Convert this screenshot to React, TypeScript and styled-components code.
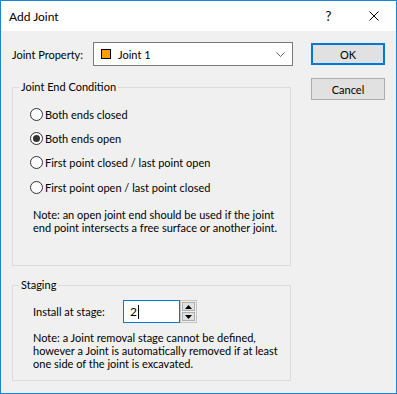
import React, { FC } from "react";
import styled, { createGlobalStyle } from "styled-components";

const GlobalStyle = createGlobalStyle`
  html, body {
    margin: 0;
    padding: 0;
  }
  body {
    font-family: Lato, "Liberation Sans", sans-serif;
    font-size: 11px;
    color: #000;
  }
  * {
    box-sizing: border-box;
  }
`;

const Window = styled.div`
  width: 397px;
  height: 394px;
  border: 1px solid #1883d7;
  display: flex;
  flex-direction: column;
  background: #f0f0f0;
  overflow: hidden;
`;

const TitleBar = styled.div`
  height: 30px;
  background: #fff;
  display: flex;
  align-items: center;
  padding-left: 8px;
`;

const Title = styled.div`
  flex: 1;
  font-size: 12px;
  padding-top: 1px;
`;

const TitleButton = styled.div`
  width: 45px;
  height: 30px;
  display: flex;
  align-items: center;
  justify-content: center;
  font-size: 13px;
`;

const Body = styled.div`
  flex: 1;
  display: flex;
  gap: 20px;
  padding: 11px 0 0 11px;
`;

const LeftColumn = styled.div`
  width: 279px;
  display: flex;
  flex-direction: column;
`;

const RightColumn = styled.div`
  width: 74px;
  padding-top: 1px;
  display: flex;
  flex-direction: column;
  gap: 13px;
`;

const PropertyRow = styled.div`
  display: flex;
  align-items: center;
  width: 281px;
  height: 24px;
`;

const PropertyLabel = styled.div`
  width: 81px;
`;

const Combo = styled.div`
  width: 200px;
  height: 24px;
  border: 1px solid #7a7a7a;
  background: #fff;
  display: flex;
  align-items: center;
  padding: 0 7px;
  gap: 7px;
`;

const Swatch = styled.span<{ $color: string }>`
  width: 10px;
  height: 10px;
  border: 1px solid #000;
  background: ${(p) => p.$color};
`;

const ComboText = styled.span`
  flex: 1;
`;

const Group = styled.fieldset<{ $top: number; $bottom: number }>`
  margin: ${(p) => p.$top}px 0 0 0;
  padding: 0 0 ${(p) => p.$bottom}px 0;
  border: 1px solid #dcdcdc;
  min-inline-size: 0;
`;

const Legend = styled.legend`
  margin-left: 6px;
  padding: 0 2px;
  line-height: 14px;
`;

const RadioList = styled.div`
  padding: 8px 0 0 17px;
`;

const RadioRow = styled.label`
  display: flex;
  align-items: center;
  gap: 2px;
  height: 24.3px;
  white-space: nowrap;
`;

const RadioCircle = styled.span<{ $checked?: boolean }>`
  width: 13px;
  height: 13px;
  border-radius: 50%;
  border: 1px solid #333;
  background: #fff;
  display: flex;
  align-items: center;
  justify-content: center;

  &::after {
    content: "";
    width: 7px;
    height: 7px;
    border-radius: 50%;
    background: ${(p) => (p.$checked ? "#333" : "transparent")};
  }
`;

const Note = styled.div<{ $top: number }>`
  margin-top: ${(p) => p.$top}px;
  padding-left: 20px;
  line-height: 13px;
  white-space: nowrap;
`;

const StageRow = styled.div`
  display: flex;
  align-items: center;
  padding: 8px 0 0 20px;
`;

const StageLabel = styled.div`
  width: 90px;
`;

const SpinInput = styled.div`
  width: 57px;
  height: 23px;
  border: 1px solid #0078d7;
  background: #fff;
  display: flex;
  align-items: center;
  padding-left: 6px;
  font-size: 12px;
`;

const Caret = styled.span`
  width: 1px;
  height: 14px;
  margin-left: 1px;
  background: #000;
`;

const SpinButtons = styled.div`
  width: 17px;
  height: 23px;
  display: flex;
  flex-direction: column;
  border: 1px solid #c4c4c4;
  background: #f0f0f0;
  padding: 1px;
  gap: 1px;
`;

const SpinButton = styled.div`
  flex: 1;
  border: 1px solid #adadad;
  background: #e1e1e1;
  display: flex;
  align-items: center;
  justify-content: center;
`;

const Button = styled.div<{ $default?: boolean }>`
  height: 22px;
  background: #e1e1e1;
  border: ${(p) => (p.$default ? "2px solid #0078d7" : "1px solid #adadad")};
  display: flex;
  align-items: center;
  justify-content: center;
`;

const Arrow: FC<{ up?: boolean }> = ({ up }) => (
  <svg width="7" height="4" viewBox="0 0 7 4">
    <polygon points={up ? "0,4 7,4 3.5,0" : "0,0 7,0 3.5,4"} fill="#000" />
  </svg>
);

const options = [
  "Both ends closed",
  "Both ends open",
  "First point closed / last point open",
  "First point open / last point closed"
];

export default function App() {
  return (
    <>
      <GlobalStyle />
      <Window>
        <TitleBar>
          <Title>Add Joint</Title>
          <TitleButton>?</TitleButton>
          <TitleButton>
            <svg width="10" height="10" viewBox="0 0 10 10">
              <path d="M0.5 0.5 L9.5 9.5 M9.5 0.5 L0.5 9.5" stroke="#000" strokeWidth="1" />
            </svg>
          </TitleButton>
        </TitleBar>
        <Body>
          <LeftColumn>
            <PropertyRow>
              <PropertyLabel>Joint Property:</PropertyLabel>
              <Combo>
                <Swatch $color="#ffa000" />
                <ComboText>Joint 1</ComboText>
                <svg width="9" height="5" viewBox="0 0 9 5">
                  <polyline points="0.5,0.5 4.5,4.5 8.5,0.5" fill="none" stroke="#606060" strokeWidth="1" />
                </svg>
              </Combo>
            </PropertyRow>

            <Group $top={14} $bottom={31}>
              <Legend>Joint End Condition</Legend>
              <RadioList>
                {options.map((o, i) => (
                  <RadioRow key={o}>
                    <RadioCircle $checked={i === 1} />
                    {o}
                  </RadioRow>
                ))}
              </RadioList>
              <Note $top={9}>
                Note: an open joint end should be used if the joint
                <br />
                end point intersects a free surface or another joint.
              </Note>
            </Group>

            <Group $top={12} $bottom={10}>
              <Legend>Staging</Legend>
              <StageRow>
                <StageLabel>Install at stage:</StageLabel>
                <SpinInput>
                  2<Caret />
                </SpinInput>
                <SpinButtons>
                  <SpinButton>
                    <Arrow up />
                  </SpinButton>
                  <SpinButton>
                    <Arrow />
                  </SpinButton>
                </SpinButtons>
              </StageRow>
              <Note $top={8}>
                Note: a Joint removal stage cannot be defined,
                <br />
                however a Joint is automatically removed if at least
                <br />
                one side of the joint is excavated.
              </Note>
            </Group>
          </LeftColumn>
          <RightColumn>
            <Button $default>OK</Button>
            <Button>Cancel</Button>
          </RightColumn>
        </Body>
      </Window>
    </>
  );
}
